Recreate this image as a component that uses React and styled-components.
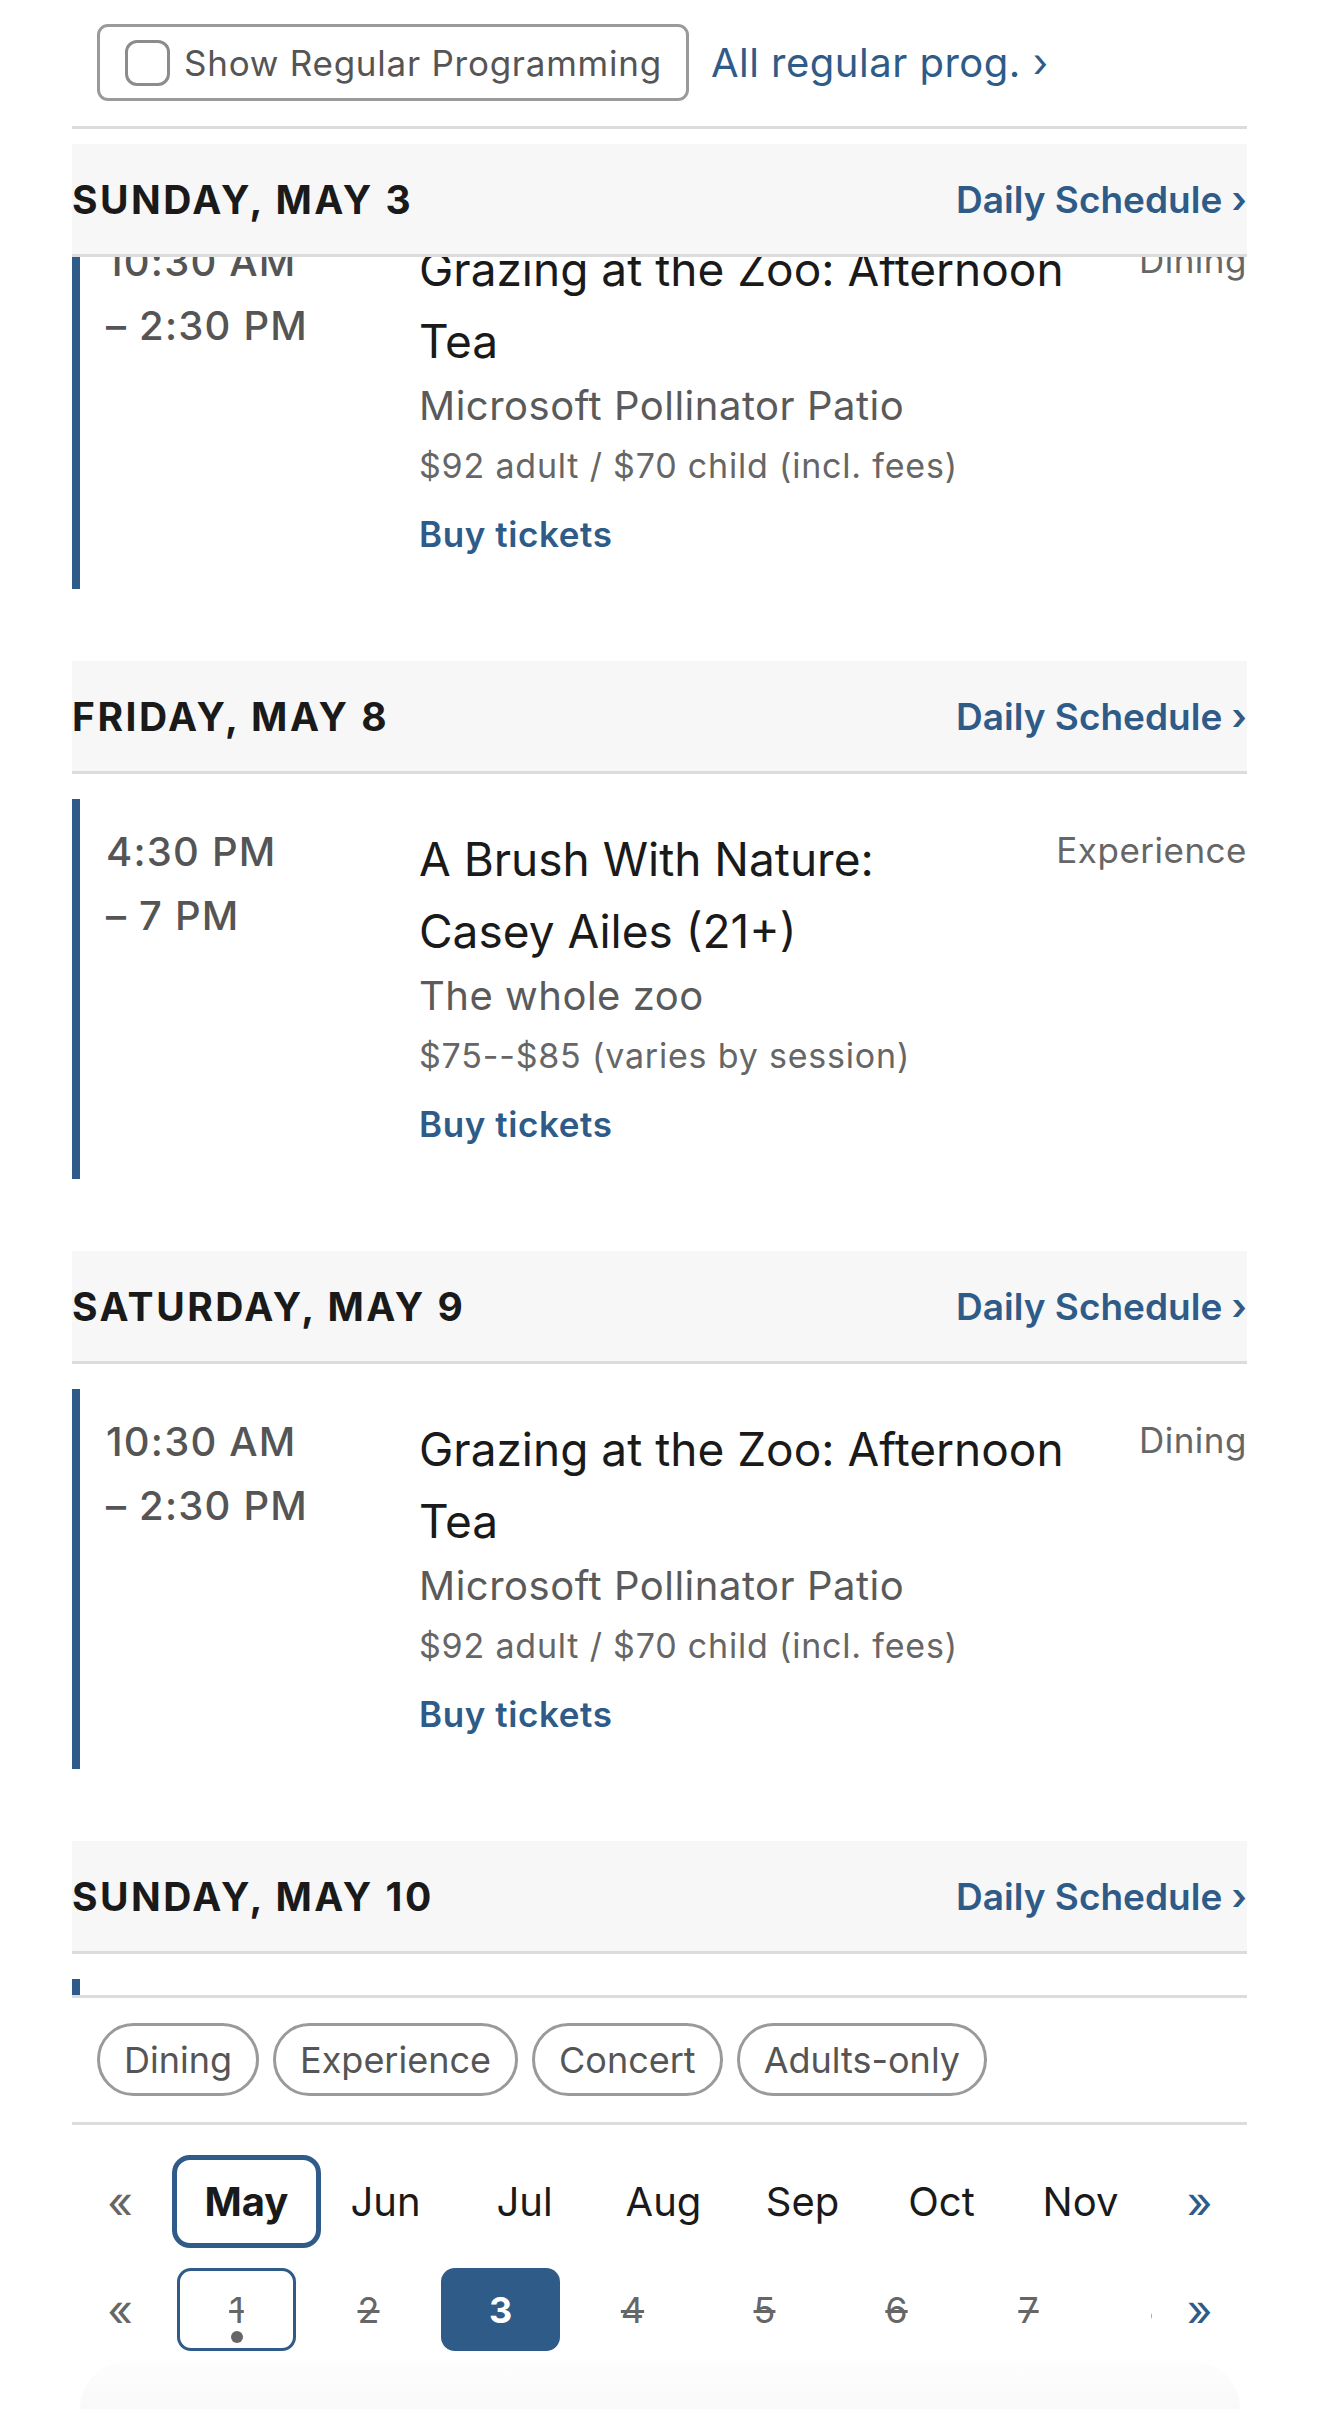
import React, { useLayoutEffect, useRef } from "react";
import styled, { createGlobalStyle } from "styled-components";

const blue = "#2f5b88";
const rule = "#dcdcdc";

const GlobalStyle = createGlobalStyle`
  html, body {
    margin: 0;
    padding: 0;
    background: #fff;
  }
  body {
    font-family: Inter, "Noto Sans", "Liberation Sans", sans-serif;
    color: #1a1a1a;
    -webkit-font-smoothing: antialiased;
  }
  * {
    box-sizing: border-box;
  }
`;

const Page = styled.div`
  width: 1320px;
  height: 2409px;
  padding: 0 73px 0 72px;
  display: flex;
  flex-direction: column;
  overflow: hidden;
`;

const Toolbar = styled.div`
  display: flex;
  align-items: center;
  gap: 22px;
  padding: 24px 25px 25px;
  border-bottom: 3px solid ${rule};
`;

const ToggleButton = styled.label`
  display: flex;
  align-items: center;
  gap: 14px;
  height: 77px;
  padding: 0 24px 0 25px;
  border: 3px solid #9a9a9a;
  border-radius: 11px;
  font-size: 35px;
  letter-spacing: 0.75px;
  color: #555;
`;

const CheckSquare = styled.span`
  flex: none;
  width: 45px;
  height: 46px;
  border: 3px solid #8c8c8c;
  border-radius: 12px;
`;

const RegularLink = styled.a`
  font-size: 40px;
  letter-spacing: 0.5px;
  color: ${blue};
  text-decoration: none;
`;

const Schedule = styled.div`
  margin-top: 15px;
  height: 1854px;
  flex: none;
  overflow-y: auto;
  border-bottom: 3px solid ${rule};
  scrollbar-width: none;
  &::-webkit-scrollbar {
    display: none;
  }
`;

const DaySection = styled.section`
  & + & {
    margin-top: 72px;
  }
`;

const DayHeader = styled.div`
  position: sticky;
  top: 0;
  z-index: 2;
  display: flex;
  align-items: center;
  justify-content: space-between;
  height: 113px;
  background: #f7f7f7;
  border-bottom: 3px solid ${rule};
`;

const DayTitle = styled.h2`
  margin: 0;
  font-size: 39px;
  font-weight: 700;
  letter-spacing: 2.5px;
  color: #1a1a1a;
`;

const DailyLink = styled.a`
  font-size: 37px;
  font-weight: 600;
  color: ${blue};
  text-decoration: none;
`;

const EventCard = styled.article`
  display: flex;
  margin-top: 25px;
  padding: 21px 0 30px 26px;
  border-left: 8px solid ${blue};
`;

const TimeCol = styled.div`
  flex: none;
  width: 313px;
  font-size: 40px;
  line-height: 64px;
  font-weight: 500;
  letter-spacing: 1.2px;
  color: #555;
`;

const Details = styled.div`
  flex: 1;
  min-width: 0;
  display: flex;
  align-items: flex-start;
  gap: 60px;
`;

const Info = styled.div`
  flex: 1;
  min-width: 0;
  padding-top: 4px;
`;

const Title = styled.h3`
  margin: 0;
  font-size: 46px;
  line-height: 71.5px;
  font-weight: 400;
  color: #1a1a1a;
`;

const Place = styled.div`
  font-size: 40px;
  line-height: 58px;
  letter-spacing: 0.5px;
  color: #5a5a5a;
`;

const Price = styled.div`
  font-size: 34px;
  line-height: 61px;
  letter-spacing: 0.8px;
  color: #666;
`;

const BuyLink = styled.a`
  display: block;
  margin-top: 13px;
  font-size: 35px;
  line-height: 50px;
  font-weight: 600;
  letter-spacing: 0.6px;
  color: ${blue};
  text-decoration: none;
`;

const Category = styled.div`
  flex: none;
  padding-top: 5px;
  font-size: 35px;
  line-height: 50px;
  letter-spacing: 0.5px;
  color: #666;
`;

const TagBar = styled.div`
  display: flex;
  gap: 14px;
  padding: 25px 25px 26px;
  border-bottom: 3px solid ${rule};
`;

const Tag = styled.button`
  height: 73px;
  padding: 0 24px;
  border: 3px solid #9a9a9a;
  border-radius: 37px;
  background: #fff;
  font-family: inherit;
  font-size: 36px;
  color: #555;
`;

const Pager = styled.div`
  display: flex;
  flex-direction: column;
  gap: 20px;
  margin-top: 30px;
`;

const PagerRow = styled.div`
  display: flex;
  align-items: center;
`;

const Arrow = styled.button`
  flex: none;
  width: ${(p) => (p.$next ? "95px" : "100px")};
  padding: ${(p) => (p.$next ? "0" : "0 4px 0 0")};
  border: none;
  background: none;
  text-align: center;
  font-family: inherit;
  font-size: 44px;
  line-height: 1;
  color: ${(p) => (p.$next ? blue : "#666")};
`;

const Strip = styled.div`
  flex: 1;
  min-width: 0;
  display: flex;
  gap: ${(p) => p.$gap || 0}px;
  padding: ${(p) => (p.$pad ? "5px 0 5px 5px" : "0 0 0 5px")};
  overflow: hidden;
`;

const MonthCell = styled.button`
  position: relative;
  z-index: ${(p) => (p.$active ? 1 : 0)};
  flex: none;
  width: 139px;
  height: 83px;
  padding: 0;
  border: none;
  border-radius: 13px;
  background: transparent;
  font-family: inherit;
  font-size: 40px;
  font-weight: ${(p) => (p.$active ? 700 : 400)};
  color: #1a1a1a;
  outline: ${(p) => (p.$active ? `5px solid ${blue}` : "none")};
`;

const DayCell = styled.button`
  position: relative;
  flex: none;
  width: 119px;
  height: 83px;
  padding: 0;
  border: 3px solid ${(p) => (p.$today ? blue : "transparent")};
  border-radius: 14px;
  background: ${(p) => (p.$active ? blue : "#fff")};
  font-family: inherit;
  font-size: 36px;
  font-weight: ${(p) => (p.$active ? 700 : 400)};
  color: ${(p) => (p.$active ? "#fff" : "#666")};
  text-decoration: ${(p) => (p.$past ? "line-through" : "none")};
  text-decoration-thickness: 3px;
`;

const Dot = styled.span`
  position: absolute;
  left: 50%;
  bottom: 5px;
  width: 12px;
  height: 12px;
  margin-left: -6px;
  border-radius: 50%;
  background: #666;
`;

const BottomShade = styled.div`
  flex: 1;
  margin: 10px 7px 0 8px;
  border-radius: 120px 120px 0 0;
  background: linear-gradient(#fdfdfd, #f9f9f9);
`;

const days = [
  {
    label: "SUNDAY, MAY 3",
    event: {
      start: "10:30 AM",
      end: "– 2:30 PM",
      title: "Grazing at the Zoo: Afternoon Tea",
      place: "Microsoft Pollinator Patio",
      price: "$92 adult / $70 child (incl. fees)",
      category: "Dining",
    },
  },
  {
    label: "FRIDAY, MAY 8",
    event: {
      start: "4:30 PM",
      end: "– 7 PM",
      title: "A Brush With Nature: Casey Ailes (21+)",
      place: "The whole zoo",
      price: "$75--$85 (varies by session)",
      category: "Experience",
    },
  },
  {
    label: "SATURDAY, MAY 9",
    event: {
      start: "10:30 AM",
      end: "– 2:30 PM",
      title: "Grazing at the Zoo: Afternoon Tea",
      place: "Microsoft Pollinator Patio",
      price: "$92 adult / $70 child (incl. fees)",
      category: "Dining",
    },
  },
  {
    label: "SUNDAY, MAY 10",
    event: {
      start: "10:30 AM",
      end: "– 2:30 PM",
      title: "Grazing at the Zoo: Afternoon Tea",
      place: "Microsoft Pollinator Patio",
      price: "$92 adult / $70 child (incl. fees)",
      category: "Dining",
    },
  },
];

const tags = ["Dining", "Experience", "Concert", "Adults-only"];
const months = ["May", "Jun", "Jul", "Aug", "Sep", "Oct", "Nov", "Dec"];
const dayNumbers = [1, 2, 3, 4, 5, 6, 7, 8, 9, 10];

const App = () => {
  const scheduleRef = useRef(null);

  // the list is shown scrolled a little, with the first day header pinned
  useLayoutEffect(() => {
    if (scheduleRef.current) scheduleRef.current.scrollTop = 73;
  }, []);

  return (
    <>
      <GlobalStyle />
      <Page>
        <Toolbar>
          <ToggleButton>
            <CheckSquare />
            Show Regular Programming
          </ToggleButton>
          <RegularLink href="#">All regular prog. ›</RegularLink>
        </Toolbar>

        <Schedule ref={scheduleRef}>
          {days.map((day) => (
            <DaySection key={day.label}>
              <DayHeader>
                <DayTitle>{day.label}</DayTitle>
                <DailyLink href="#">Daily Schedule ›</DailyLink>
              </DayHeader>
              <EventCard>
                <TimeCol>
                  <div>{day.event.start}</div>
                  <div>{day.event.end}</div>
                </TimeCol>
                <Details>
                  <Info>
                    <Title>{day.event.title}</Title>
                    <Place>{day.event.place}</Place>
                    <Price>{day.event.price}</Price>
                    <BuyLink href="#">Buy tickets</BuyLink>
                  </Info>
                  <Category>{day.event.category}</Category>
                </Details>
              </EventCard>
            </DaySection>
          ))}
        </Schedule>

        <TagBar>
          {tags.map((t) => (
            <Tag key={t}>{t}</Tag>
          ))}
        </TagBar>

        <Pager>
          <PagerRow>
            <Arrow>«</Arrow>
            <Strip $pad>
              {months.map((m) => (
                <MonthCell key={m} $active={m === "May"}>
                  {m}
                </MonthCell>
              ))}
            </Strip>
            <Arrow $next>»</Arrow>
          </PagerRow>
          <PagerRow>
            <Arrow>«</Arrow>
            <Strip $gap={13}>
              {dayNumbers.map((n) => (
                <DayCell
                  key={n}
                  $today={n === 1}
                  $active={n === 3}
                  $past={n !== 3 && n < 8}
                >
                  {n}
                  {n === 1 && <Dot />}
                </DayCell>
              ))}
            </Strip>
            <Arrow $next>»</Arrow>
          </PagerRow>
        </Pager>

        <BottomShade />
      </Page>
    </>
  );
};

export default App;
